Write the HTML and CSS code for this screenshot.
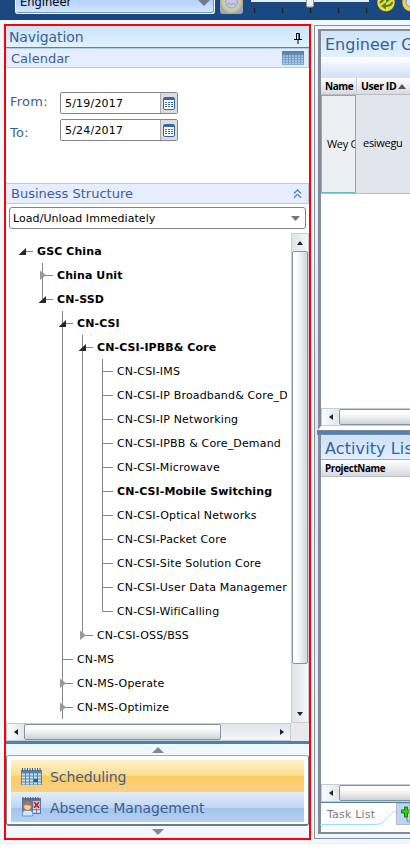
FILE: index.html
```html
<!DOCTYPE html>
<html lang="en">
<head>
<meta charset="utf-8">
<title>Scheduling</title>
<link rel="stylesheet" href="styles.css">
</head>
<body>
<svg class="defs" width="0" height="0">
  <defs>
    <symbol id="v" viewBox="0 0 20 24"><path d="M9.5 0v24" stroke="#858585"/></symbol>
    <symbol id="t" viewBox="0 0 20 24"><path d="M9.5 0v24M9.5 12.5H20" stroke="#858585"/></symbol>
    <symbol id="l" viewBox="0 0 20 24"><path d="M9.5 0v12.5H20" stroke="#858585" fill="none"/></symbol>
    <symbol id="root" viewBox="0 0 20 24"><path d="M9 12.5h11" stroke="#858585"/><path d="M5.500 16h7.500V9z" fill="#262626"/></symbol>
    <symbol id="to" viewBox="0 0 20 24"><path d="M9.500 0v24M9.500 12.500H20" stroke="#858585"/><path d="M5.500 16h7.500V9z" fill="#262626"/></symbol>
    <symbol id="lo" viewBox="0 0 20 24"><path d="M9.500 0v12.500H20" stroke="#858585" fill="none"/><path d="M5.500 16h7.500V9z" fill="#262626"/></symbol>
    <symbol id="tc" viewBox="0 0 20 24"><path d="M9.500 0v24M9.500 12.500H20" stroke="#858585"/><path d="M7 7.500v9.500l6-4.700z" fill="#999"/></symbol>
    <symbol id="lc" viewBox="0 0 20 24"><path d="M9.500 0v12.500H20" stroke="#858585" fill="none"/><path d="M7 7.500v9.500l6-4.700z" fill="#999"/></symbol>
    <symbol id="cal" viewBox="0 0 12 13"><rect x=".5" y=".5" width="11" height="12" rx="1.500" fill="#fff" stroke="#3567a8"/><path d="M1 2h10" stroke="#3567a8" stroke-width="2"/><path d="M2 5.500h8M2 7.500h8M2 9.500h8" stroke="#3567a8" stroke-dasharray="2 1"/></symbol>
    <linearGradient id="gc" x1="0" y1="0" x2="0" y2="1"><stop offset="0" stop-color="#567fac"/><stop offset="1" stop-color="#7eaed8"/></linearGradient>
  </defs>
</svg>
<header class="topbar">
  <div class="role"><span>Engineer</span><svg width="12" height="6" viewBox="0 0 12 6"><path d="M0 0h12L6 6z" fill="#737b86"/></svg></div>
  <div class="face"><svg width="23" height="14" viewBox="0 0 23 14"><circle cx="11.500" cy="2.500" r="9.200" fill="#c6cbd0" stroke="#d8c37b" stroke-width="2"/><circle cx="11.500" cy="2" r="6" fill="#c9c5df" stroke="#8daccb"/><path d="M7 5l2-2 2 2 2-2 3 2" stroke="#a99bba" fill="none"/></svg></div>
  <svg class="slider" width="120" height="14" viewBox="0 0 120 14"><path d="M1 0h118v2H1z" fill="#e6eaef"/><path d="M4.500 8v5M32.500 8v5M60.500 8v5M88.500 8v5M116.500 8v5" stroke="#050b14"/><rect x="56.500" y="-4" width="7" height="11" rx="1.500" fill="#eee" stroke="#969696"/></svg>
  <svg class="round refresh" width="18" height="12" viewBox="0 0 18 12"><circle cx="9" cy="2.500" r="8.700" fill="#f7d83a"/><path d="M3 3l4-4h4M15 2c0 3-3 4-7 4" stroke="#45861e" stroke-width="2.200" fill="none"/><path d="M9 2.500V9.500L4 6zM9-3v6l4-3z" fill="#45861e"/></svg>
  <svg class="round" width="18" height="12" viewBox="0 0 18 12"><circle cx="9" cy="2.500" r="8.700" fill="#f7ce42"/><circle cx="9" cy="2" r="5" fill="#d3e4f4" stroke="#7b96ae"/></svg>
</header>
<main class="work">
  <aside class="nav">
    <h1 class="nav-title">Navigation<svg width="8" height="11" viewBox="0 0 8 11"><path d="M2.500 6V.5h3V6M5 1v5M0 6.500h8M4 7v4" stroke="#000" fill="none"/></svg></h1>
    <h2 class="sec cal-title">Calendar<svg width="22" height="14" viewBox="0 0 22 14"><path d="M0 0h22v14H0z" fill="url(#gc)"/><path d="M1 5h20M1 7.500h20M1 10h20M1 12.300h20" stroke="#b4cce2" stroke-width="1.300" stroke-dasharray="2 1"/></svg></h2>
    <div class="dates">
      <div class="date"><label>From:</label><div class="field"><span>5/19/2017</span><b><svg width="12" height="13"><use href="#cal"/></svg></b></div></div>
      <div class="date second"><label>To:</label><div class="field"><span>5/24/2017</span><b><svg width="12" height="13"><use href="#cal"/></svg></b></div></div>
    </div>
    <h2 class="sec biz">Business Structure<svg width="9" height="10" viewBox="0 0 9 10"><path d="M1 4.500L4.500 1 8 4.500M1 8.800l3.500-3.500L8 8.800" stroke="#4e7fc4" stroke-width="1.300" fill="none"/></svg></h2>
    <div class="combo"><span>Load/Unload Immediately</span><svg width="9" height="5" viewBox="0 0 9 5"><path d="M0 0h9L4.500 5z" fill="#777"/></svg></div>
    <div class="treebox">
      <div class="tree">
        <div class="row bold"><svg><use href="#root"/></svg><span>GSC China</span></div>
        <div class="row bold"><svg></svg><svg><use href="#tc"/></svg><span>China Unit</span></div>
        <div class="row bold"><svg></svg><svg><use href="#lo"/></svg><span>CN-SSD</span></div>
        <div class="row bold"><svg></svg><svg></svg><svg><use href="#to"/></svg><span>CN-CSI</span></div>
        <div class="row bold"><svg></svg><svg></svg><svg><use href="#v"/></svg><svg><use href="#to"/></svg><span>CN-CSI-IPBB&amp; Core</span></div>
        <div class="row"><svg></svg><svg></svg><svg><use href="#v"/></svg><svg><use href="#v"/></svg><svg><use href="#t"/></svg><span>CN-CSI-IMS</span></div>
        <div class="row"><svg></svg><svg></svg><svg><use href="#v"/></svg><svg><use href="#v"/></svg><svg><use href="#t"/></svg><span>CN-CSI-IP Broadband&amp; Core_D</span></div>
        <div class="row"><svg></svg><svg></svg><svg><use href="#v"/></svg><svg><use href="#v"/></svg><svg><use href="#t"/></svg><span>CN-CSI-IP Networking</span></div>
        <div class="row"><svg></svg><svg></svg><svg><use href="#v"/></svg><svg><use href="#v"/></svg><svg><use href="#t"/></svg><span>CN-CSI-IPBB &amp; Core_Demand</span></div>
        <div class="row"><svg></svg><svg></svg><svg><use href="#v"/></svg><svg><use href="#v"/></svg><svg><use href="#t"/></svg><span>CN-CSI-Microwave</span></div>
        <div class="row bold"><svg></svg><svg></svg><svg><use href="#v"/></svg><svg><use href="#v"/></svg><svg><use href="#t"/></svg><span>CN-CSI-Mobile Switching</span></div>
        <div class="row"><svg></svg><svg></svg><svg><use href="#v"/></svg><svg><use href="#v"/></svg><svg><use href="#t"/></svg><span>CN-CSI-Optical Networks</span></div>
        <div class="row"><svg></svg><svg></svg><svg><use href="#v"/></svg><svg><use href="#v"/></svg><svg><use href="#t"/></svg><span>CN-CSI-Packet Core</span></div>
        <div class="row"><svg></svg><svg></svg><svg><use href="#v"/></svg><svg><use href="#v"/></svg><svg><use href="#t"/></svg><span>CN-CSI-Site Solution Core</span></div>
        <div class="row"><svg></svg><svg></svg><svg><use href="#v"/></svg><svg><use href="#v"/></svg><svg><use href="#t"/></svg><span>CN-CSI-User Data Managemen</span></div>
        <div class="row"><svg></svg><svg></svg><svg><use href="#v"/></svg><svg><use href="#v"/></svg><svg><use href="#l"/></svg><span>CN-CSI-WifiCalling</span></div>
        <div class="row"><svg></svg><svg></svg><svg><use href="#v"/></svg><svg><use href="#lc"/></svg><span>CN-CSI-OSS/BSS</span></div>
        <div class="row"><svg></svg><svg></svg><svg><use href="#t"/></svg><span>CN-MS</span></div>
        <div class="row"><svg></svg><svg></svg><svg><use href="#tc"/></svg><span>CN-MS-Operate</span></div>
        <div class="row"><svg></svg><svg></svg><svg><use href="#tc"/></svg><span>CN-MS-Optimize</span></div>
      </div>
      <div class="vbar"><div class="cap"><svg width="6" height="4" viewBox="0 0 6 4"><path d="M0 4h6L3 0z"/></svg></div><div class="thumb"></div><div class="cap end"><svg width="6" height="4" viewBox="0 0 6 4"><path d="M0 0h6L3 4z"/></svg></div></div>
      <div class="hbar"><div class="cap"><svg width="4" height="6" viewBox="0 0 4 6"><path d="M4 0v6L0 3z"/></svg></div><div class="thumb"></div><div class="cap end"><svg width="4" height="6" viewBox="0 0 4 6"><path d="M0 0v6l4-3z"/></svg></div></div>
      <div class="corner"></div>
    </div>
    <div class="splitter"></div>
    <div class="arrow"><svg width="12" height="6" viewBox="0 0 12 6"><path d="M0 6h12L6 0z"/></svg></div>
    <div class="modules">
      <div class="mod on"><svg width="21" height="17" viewBox="0 0 21 17"><path d="M0 2h21v15H0z" fill="#5484b1"/><path d="M1.500 0v3M4 0v3M6.500 0v3M9 0v3M11.500 0v3M14 0v3M16.500 0v3M19 0v3" stroke="#355f87"/><path d="M1 6.500h19M1 9.500h19M1 12.500h19M1 15.500h19" stroke="#cfdfec" stroke-width="2" stroke-dasharray="3 1"/><path d="M13 11h4v3h-4z" fill="#0868bb"/></svg><span>Scheduling</span></div>
      <div class="mod"><svg width="21" height="20" viewBox="0 0 21 20"><path d="M1 1h19v16H1z" fill="#60799b"/><path d="M2 0v3M4.500 0v3M7 0v3M9.500 0v3M12 0v3M14.500 0v3M17 0v3" stroke="#3d6084"/><path d="M12 5.500h7M12 11h7M12 14.500h7" stroke="#e4edf7" stroke-width="2.500" stroke-dasharray="3 1"/><path d="M12.500 4.500h6v7h-6z" fill="#f3dce1"/><path d="M13 5l5 6M18 5l-5 6" stroke="#c91424" stroke-width="1.700"/><path d="M1.500 19c-.8-4 1-6 5-6s6 2 5 6z" fill="#d4e7f8" stroke="#5d9bd0"/><circle cx="6.500" cy="9.500" r="4" fill="#f2d0b4" stroke="#a96740"/><path d="M2.500 9c0-6 8-6 8 0-3 0-5-2-8 0z" fill="#b97548"/></svg><span>Absence Management</span></div>
    </div>
    <div class="arrow low"><svg width="12" height="6" viewBox="0 0 12 6"><path d="M0 0h12L6 6z"/></svg></div>
  </aside>
  <section class="right">
    <div class="panel top">
      <h1 class="ptitle">Engineer G</h1>
      <div class="strip"></div>
      <div class="cols"><span class="c1">Name</span><span class="c2">User ID<svg width="8" height="5" viewBox="0 0 8 5"><path d="M0 5h8L4 0z" fill="#555"/></svg></span></div>
      <div class="data"><span class="d1">Wey G</span><span class="d2">esiwegu</span></div>
      <div class="blank"></div>
      <div class="hbar"><div class="cap"><svg width="4" height="6" viewBox="0 0 4 6"><path d="M4 0v6L0 3z"/></svg></div><div class="thumb"></div></div>
    </div>
    <div class="divider"></div>
    <div class="panel bottom">
      <h1 class="ptitle">Activity Lis</h1>
      <div class="cols project"><span>ProjectName</span></div>
      <div class="blank"></div>
      <div class="hbar"><div class="cap"><svg width="4" height="6" viewBox="0 0 4 6"><path d="M4 0v6L0 3z"/></svg></div><div class="thumb"></div></div>
      <div class="tabs"><span>Task List</span><svg class="curve" width="76" height="22" viewBox="0 0 76 22"><path d="M0 21.500h56C65 21.500 68 11 76 8" stroke="#97e1f5" fill="none"/></svg><div class="add"><svg width="11" height="16" viewBox="0 0 11 16"><path d="M6 6h7v9H6z" fill="#d9d9d9" stroke="#777"/><path d="M3.500 1h3v3h3v3h-3v4h-3V7h-3V4h3z" fill="#37c91c" stroke="#168008"/></svg></div></div>
    </div>
  </section>
</main>
</body>
</html>
```

FILE: styles.css
```css
* { box-sizing: border-box; }
body { margin: 0; width: 410px; height: 864px; overflow: hidden; background: #fff; font: 11px "DejaVu Sans", sans-serif; color: #000; }
h1, h2 { margin: 0; font-weight: normal; }
svg { display: block; flex: none; }
.defs { position: absolute; }
.topbar { height: 20px; background: #1a4880; display: flex; align-items: flex-start; padding-left: 15px; overflow: hidden; }
.role { width: 200px; height: 14px; flex: none; background: linear-gradient(#b3d2fd, #d4e6ff); border: 1px solid #fff; border-top: 0; border-radius: 0 0 3px 3px; display: flex; justify-content: space-between; padding: 0 4px; font-size: 11.5px; line-height: 5px; box-shadow: inset -1px -1px #7b94b5; }
.face { margin-left: 5px; width: 23px; height: 14px; flex: none; background: #9da9b7; border-radius: 0 0 3px 3px; overflow: hidden; }
.slider { margin-left: 7px; }
.round { margin-left: 7px; }
.round.refresh { margin-left: 7px; }
.work { height: 824px; background: #f0f7ff; border-bottom: 1px solid #efeff2; display: flex; align-items: flex-start; padding: 4px 0 0 4px; }
.nav { width: 307px; height: 816px; border: 2px solid #f00; display: flex; flex-direction: column; background: #fff; flex: none; }
.nav-title { height: 22px; flex: none; background: linear-gradient(#cae4fa, #e0f2fd); border-bottom: 1px solid #4a86b6; display: flex; justify-content: space-between; align-items: center; padding: 0 7px 0 3px; font-size: 14px; color: #3a5f96; line-height: 20px; letter-spacing: -.1px; }
.nav-title svg { margin-top: 3px; }
.sec { height: 20px; flex: none; background: #e6edfe; border: 1px solid #b0cdee; border-left: 0; font-size: 13px; color: #3a5f96; display: flex; justify-content: space-between; align-items: center; padding: 0 4px 0 5px; letter-spacing: 0; }
.dates { height: 115px; flex: none; padding-top: 24px; }
.date { display: flex; height: 22px; padding-left: 4px; color: #3a5f96; font-size: 13px; letter-spacing: .25px; }
.date label { width: 50px; line-height: 19px; }
.date.second { margin-top: 5px; }
.second label { line-height: 28px; }
.field { width: 118px; border: 1px solid #858590; border-radius: 2px; display: flex; color: #000; font-size: 11px; line-height: 21px; }
.field span { width: 100px; padding-left: 4px; border-right: 1px solid #aaa; letter-spacing: .2px; }
.field b { flex: 1; background: #dcdcdc; display: grid; place-items: center; }
.biz { height: 21px; padding-right: 6px; }
.combo { margin: 3px 3px 0; height: 22px; flex: none; border: 1px solid #828282; border-radius: 3px; display: flex; justify-content: space-between; align-items: center; padding: 0 5px 0 3px; letter-spacing: .06px; }
.treebox { margin-top: 4px; height: 508px; flex: none; display: grid; grid-template-columns: 285px 18px; grid-template-rows: 490px 18px; }
.tree { padding: 6px 0 0 7px; width: 281px; height: 486px; overflow: hidden; }
.row { display: flex; height: 24px; white-space: nowrap; line-height: 24px; letter-spacing: .16px; }
.row svg { width: 20px; height: 24px; }
.row span { padding: 1px 0 0 4px; }
.bold { font-weight: bold; letter-spacing: .1px; }
.vbar { display: flex; flex-direction: column; border: 1px solid #c6d0d8; background: linear-gradient(90deg, #dfe4ea, #f3f7fa); }
.vbar .cap { height: 17px; display: grid; place-items: center; }
.vbar .thumb { height: 413px; border: 1px solid #8794a0; border-radius: 2px; background: linear-gradient(90deg, #fff 20%, #f1f2f3 50%, #d2d7db); }
.vbar .end { margin-top: auto; }
.hbar { height: 18px; flex: none; display: flex; border: 1px solid #c2ccd3; background: linear-gradient(#dfe4e9, #f5f8fb); }
.hbar .cap { width: 17px; flex: none; display: grid; place-items: center; background: linear-gradient(90deg, #fafbfc, #e3e7eb); }
.hbar .thumb { width: 197px; flex: none; border: 1px solid #8693a0; border-radius: 2px; background: linear-gradient(#fff 20%, #f0f1f2 50%, #cdd2d6); }
.hbar .end { margin-left: auto; background: none; }
.cap path { fill: #222; }
.corner { background: #e9e9e9; }
.splitter { height: 3px; flex: none; background: #4682b4; }
.arrow { height: 11px; flex: none; background: #f0f7ff; display: flex; justify-content: center; padding-top: 3px; }
.arrow path { fill: #888; }
.arrow.low { height: 12px; padding-top: 3px; }
.modules { height: 71px; flex: none; border: 1px solid #71838f; border-top-color: #a1a9b2; border-bottom: 2px solid #697b89; border-radius: 3px; padding: 4px; background: #fff; }
.mod { height: 30px; display: flex; align-items: center; padding-left: 10px; background: linear-gradient(#e4eefa, #bed6f3 52%, #a3c5ec 53%, #b7d0ef); color: #3a5f96; font-size: 14px; letter-spacing: -.1px; }
.mod.on { height: 32px; background: linear-gradient(#fff1cf, #fddd8b 48%, #fbcd61 50%, #fcd083); }
.mod span { margin-left: 8px; padding-top: 1px; }
.right { margin: 1px 0 0 3px; width: 96px; height: 814px; border: 1px solid #87919b; border-right: 0; flex: none; padding: 3px 0 0 3px; overflow: hidden; background: linear-gradient(#f0f7ff, #d8eafa 50%, #e9f5ff); }
.panel { border-left: 3px solid #838c96; display: flex; flex-direction: column; background: #fff; }
.top { height: 401px; border-top: 2px solid #838c96; border-bottom: 4px solid #fff; }
.ptitle { height: 26px; flex: none; padding-left: 4px; font-size: 16px; line-height: 27px; color: #3a5f96; background: linear-gradient(#cfe4fc, #e2f1fd); white-space: nowrap; }
.strip { height: 21px; flex: none; background: linear-gradient(#fff, #cfe0fa); }
.cols { height: 17px; flex: none; display: flex; background: linear-gradient(#fff, #d7dadf); font: bold 10.5px "Open Sans", sans-serif; letter-spacing: -.4px; line-height: 17px; border-bottom: 1px solid #b9bdc3; }
.c1 { width: 36px; padding-left: 4px; border-right: 1px solid #ccc; font-size: 10px; }
.c2 { padding-left: 4px; display: flex; align-items: center; gap: 2px; font-size: 10.5px; }
.data { height: 99px; flex: none; display: flex; background: #e1e6ee; border-bottom: 1px solid #bbb; font: 11px "Open Sans", sans-serif; letter-spacing: -.3px; line-height: 96px; }
.d1 { width: 35px; border: 1px solid #5ebccb; background: #edf0f3; padding-left: 5px; overflow: hidden; white-space: nowrap; }
.d2 { padding-left: 7px; }
.blank { flex: 1; }
.divider { height: 5px; border: 1px solid #7c8792; background: #4185c7; margin-left: -1px; }
.bottom { height: 399px; border-bottom: 2px solid #838c96; }
.bottom .ptitle { height: 25px; line-height: 28px; letter-spacing: .1px; background: linear-gradient(#cbe2fd, #e0effd); border-bottom: 1px solid #aaa; }
.project { padding-left: 4px; font-size: 9.8px; letter-spacing: -.35px; line-height: 18px; }
.tabs { height: 30px; flex: none; display: flex; border-top: 1px solid #56839e; color: #7a7a7a; background: #fff; }
.tabs span { padding-left: 6px; width: 56px; line-height: 23px; white-space: nowrap; letter-spacing: .2px; }
.curve { margin-left: -56px; }
.add { width: 14px; height: 22px; flex: none; border: 1px solid #bbb; background: #b8d5fc; overflow: hidden; padding: 2px 0 0 4px; }
```
